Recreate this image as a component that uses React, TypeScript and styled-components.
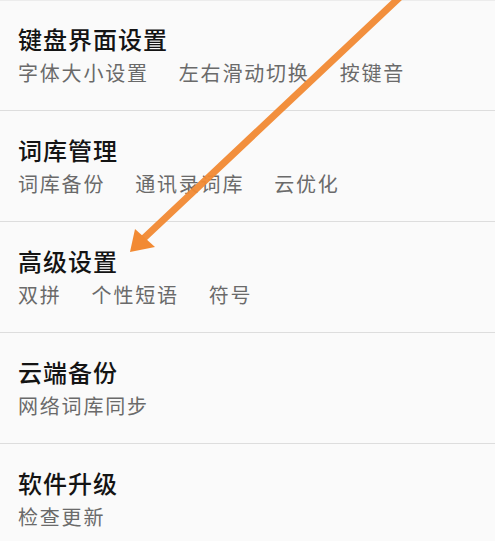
import React from "react";
import styled, { createGlobalStyle } from "styled-components";

const Global = createGlobalStyle`
  html, body { margin: 0; padding: 0; background: #fafafa; }
  body { width: 495px; height: 541px; overflow: hidden; }
`;

const Page = styled.div`
  position: relative;
  width: 495px;
  height: 541px;
  background: #fafafa;
  font-family: "Noto Sans CJK SC", "Noto Sans", sans-serif;
  box-sizing: border-box;
  &::before {
    content: "";
    position: absolute;
    left: 0;
    right: 0;
    top: 0;
    height: 1px;
    background: #ececec;
  }
`;

const List = styled.div`
  display: flex;
  flex-direction: column;
`;

const Row = styled.div`
  height: 111px;
  box-sizing: border-box;
  padding: 22px 0 0 18px;
  border-bottom: 1px solid #dddddd;
  display: flex;
  flex-direction: column;
  gap: 3px;
`;

const Title = styled.div`
  font-size: 24px;
  line-height: 34px;
  color: #141414;
  letter-spacing: 1px;
  font-weight: 500;
`;

const Subs = styled.div`
  display: flex;
  gap: 30px;
`;

const Sub = styled.span`
  font-size: 20px;
  line-height: 28px;
  color: #6a6a6a;
  letter-spacing: 1.8px;
`;

const Overlay = styled.svg`
  position: absolute;
  left: 0;
  top: 0;
  pointer-events: none;
`;

const items: { title: string; subs: string[] }[] = [
  { title: "键盘界面设置", subs: ["字体大小设置", "左右滑动切换", "按键音"] },
  { title: "词库管理", subs: ["词库备份", "通讯录词库", "云优化"] },
  { title: "高级设置", subs: ["双拼", "个性短语", "符号"] },
  { title: "云端备份", subs: ["网络词库同步"] },
  { title: "软件升级", subs: ["检查更新"] },
];

export default function App() {
  return (
    <>
      <Global />
      <Page>
        <List>
          {items.map((it) => (
            <Row key={it.title}>
              <Title>{it.title}</Title>
              <Subs>
                {it.subs.map((s) => (
                  <Sub key={s}>{s}</Sub>
                ))}
              </Subs>
            </Row>
          ))}
        </List>
        <Overlay width="495" height="541" viewBox="0 0 495 541">
          <line
            x1="400"
            y1="-3"
            x2="143"
            y2="239"
            stroke="#f28a33"
            strokeWidth="7"
            strokeLinecap="round"
            opacity="0.95"
          />
          <polygon points="130,252 135,229 155,247" fill="#f28a33" />
        </Overlay>
      </Page>
    </>
  );
}
